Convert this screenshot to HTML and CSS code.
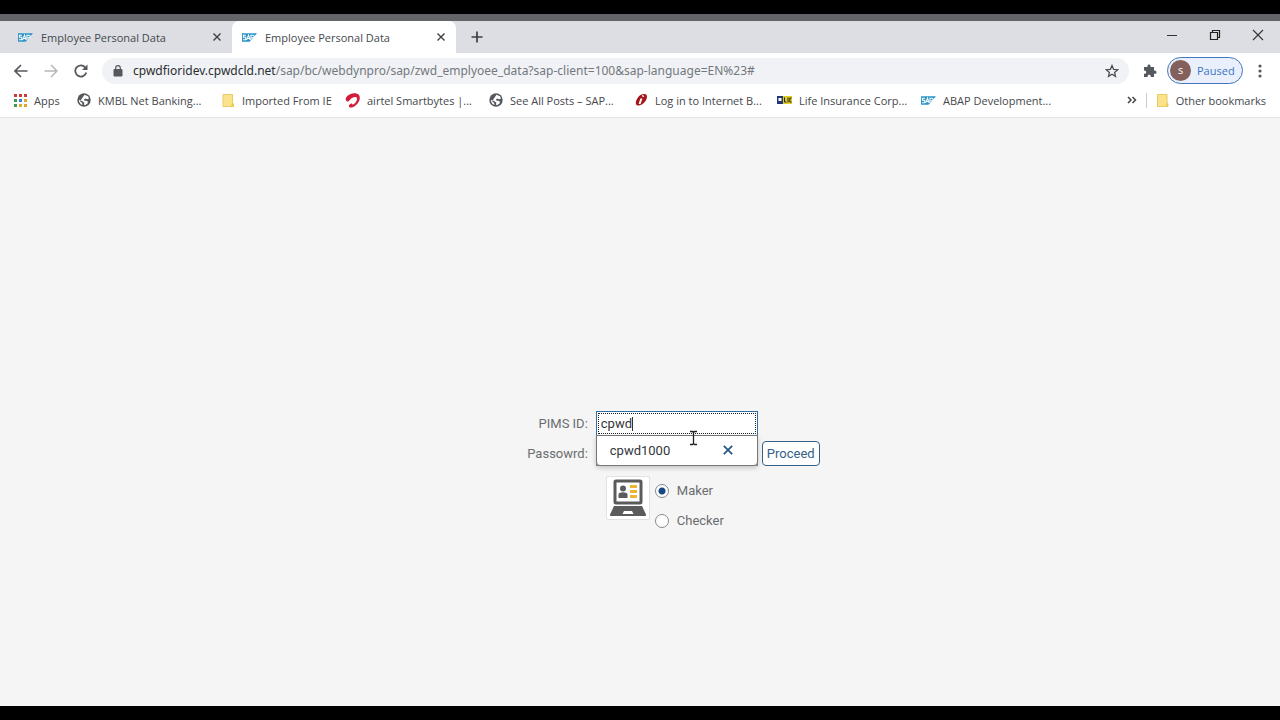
FILE: index.html
```
<!DOCTYPE html>
<html lang="en">
<head>
    <meta charset="UTF-8">
    <meta name="viewport" content="width=device-width, initial-scale=1.0">
    <title>Employee Personal Data</title>
    <link rel="stylesheet" href="styles.css">
</head>
<body>
    <!-- shared icons -->
    <svg class="sprite" aria-hidden="true">
        <symbol id="sap" viewBox="0 0 16 9">
            <path d="M0 0h16L8 9H0z" fill="#2c93c6"/>
            <path d="M4.200 2H1.500v2.300h2.500v2.500H1M5 7l2-5 1.500 5M6 5.500h2M9.500 7V2h2c2 0 2 2.800 0 2.800h-2" fill="none" stroke="#fff" stroke-width="1.100"/>
        </symbol>
        <symbol id="globe" viewBox="0 0 14 14">
            <circle cx="7" cy="7" r="6.700" fill="#55585c"/>
            <path d="M7.500 1.800l3.500 1.500 1 2.200-2 .8-1.500-.8-1.500.8.500 1.500h2l1.500 1-.5 1.700-2.500 1.700-1-.7.300-1.800-1.800-1.500-3.300-1.500L2 8.500l1.500 2.500 2 1-.5-2.200-2-1.600" fill="#fff"/>
        </symbol>
        <symbol id="folder" viewBox="0 0 12 13">
            <path d="M1 .5h9.500v8.500l1 .5v3H1z" fill="#fbe38b" stroke="#e8cb62"/>
            <path d="M9 12.500l1-3h1.500v3z" fill="#edc94e"/>
        </symbol>
        <symbol id="close" viewBox="0 0 10 10">
            <path d="M1.500 1.500l7 7M8.500 1.500l-7 7" fill="none" stroke="currentColor" stroke-width="1.400"/>
        </symbol>
    </svg>

    <div class="window-edge"></div>

    <header class="browser">
        <div class="tab-strip">
            <div class="tab">
                <svg class="favicon"><use href="#sap"/></svg>
                <span class="tab-title">Employee Personal Data</span>
                <button class="icon-btn" aria-label="Close tab"><svg width="10" height="10"><use href="#close"/></svg></button>
            </div>
            <div class="tab active">
                <svg class="favicon"><use href="#sap"/></svg>
                <span class="tab-title">Employee Personal Data</span>
                <button class="icon-btn" aria-label="Close tab"><svg width="10" height="10"><use href="#close"/></svg></button>
            </div>
            <button class="icon-btn new-tab" aria-label="New tab">
                <svg width="12" height="12" viewBox="0 0 12 12"><path d="M6 .5v11M.5 6h11" stroke="#3c4043" stroke-width="1.700"/></svg>
            </button>
            <div class="window-controls">
                <button class="icon-btn" aria-label="Minimize"><svg width="12" height="12" viewBox="0 0 12 12"><path d="M1 6.500h10" stroke="#333"/></svg></button>
                <button class="icon-btn" aria-label="Restore"><svg width="12" height="12" viewBox="0 0 12 12"><path d="M1.500 3.500h7v7h-7zM3.500 3V1.500h7v7H9" fill="none" stroke="#222" stroke-width="1.200"/></svg></button>
                <button class="icon-btn" aria-label="Close"><svg width="12" height="12" viewBox="0 0 12 12"><path d="M1 1l10 10M11 1L1 11" stroke="#333" stroke-width="1.100"/></svg></button>
            </div>
        </div>

        <div class="toolbar">
            <div class="nav-buttons">
                <button class="icon-btn" aria-label="Back"><svg width="14" height="14" viewBox="0 0 14 14"><path d="M13.500 7H1.500M7 1L1 7l6 6" fill="none" stroke="#55585c" stroke-width="1.700"/></svg></button>
                <button class="icon-btn" aria-label="Forward"><svg width="14" height="14" viewBox="0 0 14 14"><path d="M.5 7h12M7 1l6 6-6 6" fill="none" stroke="#b5b7ba" stroke-width="1.500"/></svg></button>
                <button class="icon-btn" aria-label="Reload"><svg width="14" height="14" viewBox="0 0 14 14"><path d="M12.300 8.500A5.600 5.600 0 1 1 11.200 3.300" fill="none" stroke="#55585c" stroke-width="1.800"/><path d="M13.500 .5v5.500H8z" fill="#55585c"/></svg></button>
            </div>
            <div class="address-bar">
                <svg width="10" height="12" viewBox="0 0 10 12"><path d="M1 4.500h8v6.500H1z" fill="#55585c" stroke="#55585c" stroke-linejoin="round"/><path d="M2.700 5V3a2.300 2.300 0 0 1 4.600 0v2" fill="none" stroke="#55585c" stroke-width="1.200"/></svg>
                <span class="url"><span class="host">cpwdfioridev.cpwdcld.net</span>/sap/bc/webdynpro/sap/zwd_emplyoee_data?sap-client=100&amp;sap-language=EN%23#</span>
                <button class="icon-btn" aria-label="Bookmark this tab"><svg width="14" height="14" viewBox="0 0 14 14"><path d="M7 1.500l1.600 3.800 4.100.4-3.100 2.700.9 4L7 10.300l-3.500 2.100.9-4-3.100-2.700 4.100-.4z" fill="none" stroke="#4d5054" stroke-width="1.300"/></svg></button>
            </div>
            <button class="icon-btn" aria-label="Extensions"><svg width="14" height="14" viewBox="0 0 14 14"><path d="M1 3h3.500C3.800-.3 8.200-.3 7.500 3H11v3.500c3.400-.7 3.400 4 0 3.300V13H7.800c.4-3-3.600-3-3.200 0H1V9.800c3 .2 3-3.500 0-3.300z" fill="#55585c"/></svg></button>
            <button class="profile"><span class="avatar">s</span>Paused</button>
            <button class="icon-btn menu" aria-label="Menu"><svg width="4" height="14" viewBox="0 0 4 14"><g fill="#55585c"><circle cx="2" cy="2" r="1.600"/><circle cx="2" cy="7" r="1.600"/><circle cx="2" cy="12" r="1.600"/></g></svg></button>
        </div>

        <nav class="bookmarks">
            <a class="bookmark apps" href="#">
                <svg width="14" height="14" viewBox="0 0 14 14">
                    <path d="M1 1h3v3H1zM6 1h3v3H6zM11 1h3v3h-3z" fill="#cf3a34"/>
                    <path d="M1 6h3v3H1z" fill="#3b9a55"/><path d="M6 6h3v3H6z" fill="#3b82d6"/><path d="M11 6h3v3h-3z" fill="#dfa92c"/>
                    <path d="M1 11h3v3H1z" fill="#3b9a55"/><path d="M6 11h3v3H6zM11 11h3v3h-3z" fill="#dfa92c"/>
                </svg>
                Apps
            </a>
            <a class="bookmark" href="#"><svg width="14" height="14"><use href="#globe"/></svg>KMBL Net Banking...</a>
            <a class="bookmark folder" href="#"><svg width="14" height="13"><use href="#folder"/></svg>Imported From IE</a>
            <a class="bookmark" href="#">
                <svg width="15" height="15" viewBox="0 0 15 15"><path d="M2.500 8.500C-1 7 1 3 5 1.200 9-.5 14.500 0 14.800 4.500c.2 4.500-4 9-8 10-3 .5-4-2-1.500-3.500 1.500-.8 2.500-.4 2 .8 2.500-1 5-4 4.700-6.300C11.500 3 8.500 4 6.500 5.300 5 6.500 4 8.800 2.500 8.500z" fill="#d31c38"/></svg>
                airtel Smartbytes |...
            </a>
            <a class="bookmark" href="#"><svg width="14" height="14"><use href="#globe"/></svg>See All Posts – SAP...</a>
            <a class="bookmark" href="#">
                <svg width="15" height="14" viewBox="0 0 15 14"><path d="M4 6C6 1 14-1 14 3.500 14 8 9 13 5 12.500 2 12 2.500 9 4 6z" fill="#a4161b"/><path d="M9.500 3.500l1-1M8.500 5.500L6.500 11" stroke="#fff" stroke-width="2"/></svg>
                Log in to Internet B...
            </a>
            <a class="bookmark" href="#">
                <svg width="15" height="8" viewBox="0 0 15 8"><path d="M0 0h6v8H0z" fill="#20367e"/><path d="M6 0h9v8H6z" fill="#e4cf27"/><path d="M1.500 2h3v3h-3z" fill="#fff"/><path d="M7.500 1.500v4.500h2M11 1.500V6.500M14.500 2H12.800v4h1.700" fill="none" stroke="#222"/></svg>
                Life Insurance Corp...
            </a>
            <a class="bookmark" href="#"><svg class="favicon"><use href="#sap"/></svg>ABAP Development...</a>
            <div class="bookmarks-end">
                <button class="icon-btn" aria-label="More bookmarks"><svg width="10" height="8" viewBox="0 0 10 8"><path d="M1 1l3 3-3 3M5.500 1l3 3-3 3" fill="none" stroke="#444" stroke-width="1.500"/></svg></button>
                <span class="divider"></span>
                <a class="bookmark other" href="#"><svg width="13" height="13"><use href="#folder"/></svg>Other bookmarks</a>
            </div>
        </nav>
    </header>

    <main class="page">
        <form class="login">
            <label for="pims">PIMS ID:</label>
            <div class="field">
                <input class="text-input focused" id="pims" type="text" value="cpwd" autocomplete="off">
                <span class="caret"></span>
                <div class="suggestions">
                    <span>cpwd1000</span>
                    <button class="icon-btn" type="button" aria-label="Remove suggestion"><svg width="12" height="12"><use href="#close"/></svg></button>
                </div>
                <svg class="pointer" width="9" height="16" viewBox="0 0 9 16"><path d="M1 1.500h2.500l1 1 1-1H8M4.500 2v12M1 14.500h2.500l1-1 1 1H8" fill="none" stroke="#222" stroke-width="1.300"/></svg>
            </div>

            <label class="second" for="password">Passowrd:</label>
            <input class="text-input" id="password" type="password">
            <button class="proceed" type="button">Proceed</button>

            <div class="role">
                <div class="role-image">
                    <svg width="38" height="38" viewBox="0 0 38 38">
                        <rect x="6" y="2" width="26" height="22" rx="1" fill="#fff" stroke="#5b5b5b" stroke-width="3"/>
                        <circle cx="14" cy="9.500" r="3" fill="#5b5b5b"/>
                        <path d="M9.500 19v-3.500c0-3 9-3 9 0V19z" fill="#5b5b5b"/>
                        <path d="M21 7.500h7M21 12.500h7M21 17.500h7" stroke="#edb733" stroke-width="3"/>
                        <path d="M5 27h28l4 8.500c.3 1-.2 1.500-1 1.500H2c-.8 0-1.300-.5-1-1.500z" fill="#5b5b5b"/>
                        <path d="M15 32h8l1.500 3h-11z" fill="#fff"/>
                    </svg>
                </div>
                <div class="radios">
                    <label class="radio"><input type="radio" name="role" checked>Maker</label>
                    <label class="radio"><input type="radio" name="role">Checker</label>
                </div>
            </div>
        </form>
    </main>
</body>
</html>
```

FILE: styles.css
```
* {
    box-sizing: border-box;
}
body {
    margin: 0;
    min-height: 100vh;
    display: flex;
    flex-direction: column;
    background: #f5f5f5;
    border-top: 14px solid #000;
    border-bottom: 14px solid #000;
    font-family: "Open Sans", "Noto Sans", sans-serif;
    font-size: 11px;
    color: #45484c;
}
.sprite {
    position: absolute;
    width: 0;
    height: 0;
}
.icon-btn {
    display: flex;
    padding: 0;
    border: none;
    background: none;
    color: #3c4043;
    cursor: pointer;
}
.favicon {
    width: 15px;
    height: 9px;
}
.window-edge {
    height: 7px;
    background: #646569;
}

/* browser chrome */
.browser {
    background: #fff;
    border-bottom: 1px solid #e2e3e5;
}
.tab-strip {
    display: flex;
    align-items: center;
    height: 32px;
    background: #dcdee3;
}
.tab {
    display: flex;
    align-items: center;
    gap: 8px;
    width: 224px;
    height: 32px;
    padding: 0 10px;
}
.tab:first-child {
    width: 232px;
    padding-left: 18px;
}
.tab.active {
    background: #fff;
    border-radius: 7px 7px 0 0;
}
.tab-title {
    flex: 1;
    white-space: nowrap;
}
.new-tab {
    margin-left: 15px;
}
.window-controls {
    display: flex;
    gap: 31px;
    margin-left: auto;
    padding: 0 16px 4px 0;
}
.toolbar {
    display: flex;
    align-items: center;
    height: 35px;
    padding: 0 18px 0 14px;
}
.nav-buttons {
    display: flex;
    gap: 16px;
    margin-right: 14px;
}
.address-bar {
    flex: 1;
    display: flex;
    align-items: center;
    gap: 10px;
    height: 26px;
    margin-right: 14px;
    padding: 0 10px 0 11px;
    border-radius: 13px;
    background: #f0f2f5;
}
.url {
    flex: 1;
    font-family: "Noto Sans", "Open Sans", sans-serif;
    font-size: 12px;
    color: #74787d;
    white-space: nowrap;
}
.host {
    color: #2b2e32;
}
.profile {
    display: flex;
    align-items: center;
    gap: 6px;
    width: 76px;
    height: 27px;
    margin: 0 15px 0 10px;
    padding: 0 2px;
    border: 1px solid #4476bb;
    border-radius: 14px;
    background: #e9f0fb;
    color: #3b74c6;
    font: inherit;
}
.avatar {
    width: 21px;
    height: 21px;
    border-radius: 50%;
    background: #83605c;
    color: #fff;
    line-height: 20px;
    text-align: center;
}
.bookmarks {
    display: flex;
    align-items: center;
    height: 29px;
    padding: 0 14px 5px 13px;
}
.bookmark {
    display: flex;
    align-items: center;
    gap: 7px;
    width: 144px;
    color: inherit;
    text-decoration: none;
    white-space: nowrap;
}
.bookmark.apps {
    width: 64px;
}
.bookmark.folder {
    width: 124px;
}
.bookmark.other {
    width: auto;
}
.bookmarks-end {
    display: flex;
    align-items: center;
    gap: 9px;
    margin-left: auto;
}
.divider {
    width: 1px;
    height: 15px;
    background: #c9cbce;
}

/* login form */
.page {
    flex: 1;
    display: flex;
    flex-direction: column;
    justify-content: center;
    padding-top: 112px;
    font-family: Roboto, sans-serif;
    font-size: 13px;
    color: #6a6d70;
}
.login {
    display: grid;
    grid-template-columns: 46% 162px auto;
    grid-auto-rows: 25px;
    gap: 5px 0;
    align-items: center;
}
.login > label {
    padding-right: 1px;
    text-align: right;
}
.login > .text-input,
.field {
    margin-left: 7px;
    margin-right: -7px;
}
.field {
    position: relative;
}
.text-input {
    display: block;
    height: 25px;
    padding: 0 4px;
    border: 1px solid #89919a;
    background: #fff;
    font: inherit;
    color: #32363a;
}
.field .text-input {
    width: 100%;
}
.text-input.focused {
    border-color: #2f6fa6;
    outline: 1px dotted #222;
    outline-offset: -3px;
}
.caret {
    position: absolute;
    left: 36px;
    top: 6px;
    width: 1px;
    height: 14px;
    background: #333;
}
.suggestions {
    position: absolute;
    left: 0;
    top: 24px;
    z-index: 1;
    width: 100%;
    height: 31px;
    display: flex;
    align-items: center;
    justify-content: space-between;
    padding: 0 23px 0 13px;
    border: 1px solid #777;
    border-radius: 0 0 4px 4px;
    background: #fff;
    box-shadow: 0 2px 5px rgba(0, 0, 0, 0.2);
    color: #32363a;
}
.suggestions .icon-btn {
    color: #245585;
}
.pointer {
    position: absolute;
    left: 93px;
    top: 19px;
    z-index: 2;
}
.proceed {
    justify-self: start;
    height: 25px;
    margin-left: 11px;
    padding: 0 4px;
    border: 1px solid #346187;
    border-radius: 4px;
    background: #fff;
    color: #346187;
    font: inherit;
}
.login .second {
    grid-column: 1;
}
.role {
    grid-column: 2 / 4;
    grid-row: 3 / 5;
    align-self: start;
    display: flex;
    gap: 5px;
    padding: 5px 0 0 17px;
}
.role-image {
    display: flex;
    align-items: center;
    justify-content: center;
    width: 44px;
    height: 44px;
    border: 1px solid #e2e2e2;
    border-radius: 2px;
    background: #fff;
}
.radios {
    display: flex;
    flex-direction: column;
}
.radio {
    display: flex;
    align-items: center;
    gap: 8px;
    height: 30px;
}
.radio input {
    appearance: none;
    width: 14px;
    height: 14px;
    margin: 0;
    border: 1px solid #85898d;
    border-radius: 50%;
    background: #fff;
}
.radio input:checked {
    background: radial-gradient(circle, #174a85 3px, #fff 4px);
}
```
